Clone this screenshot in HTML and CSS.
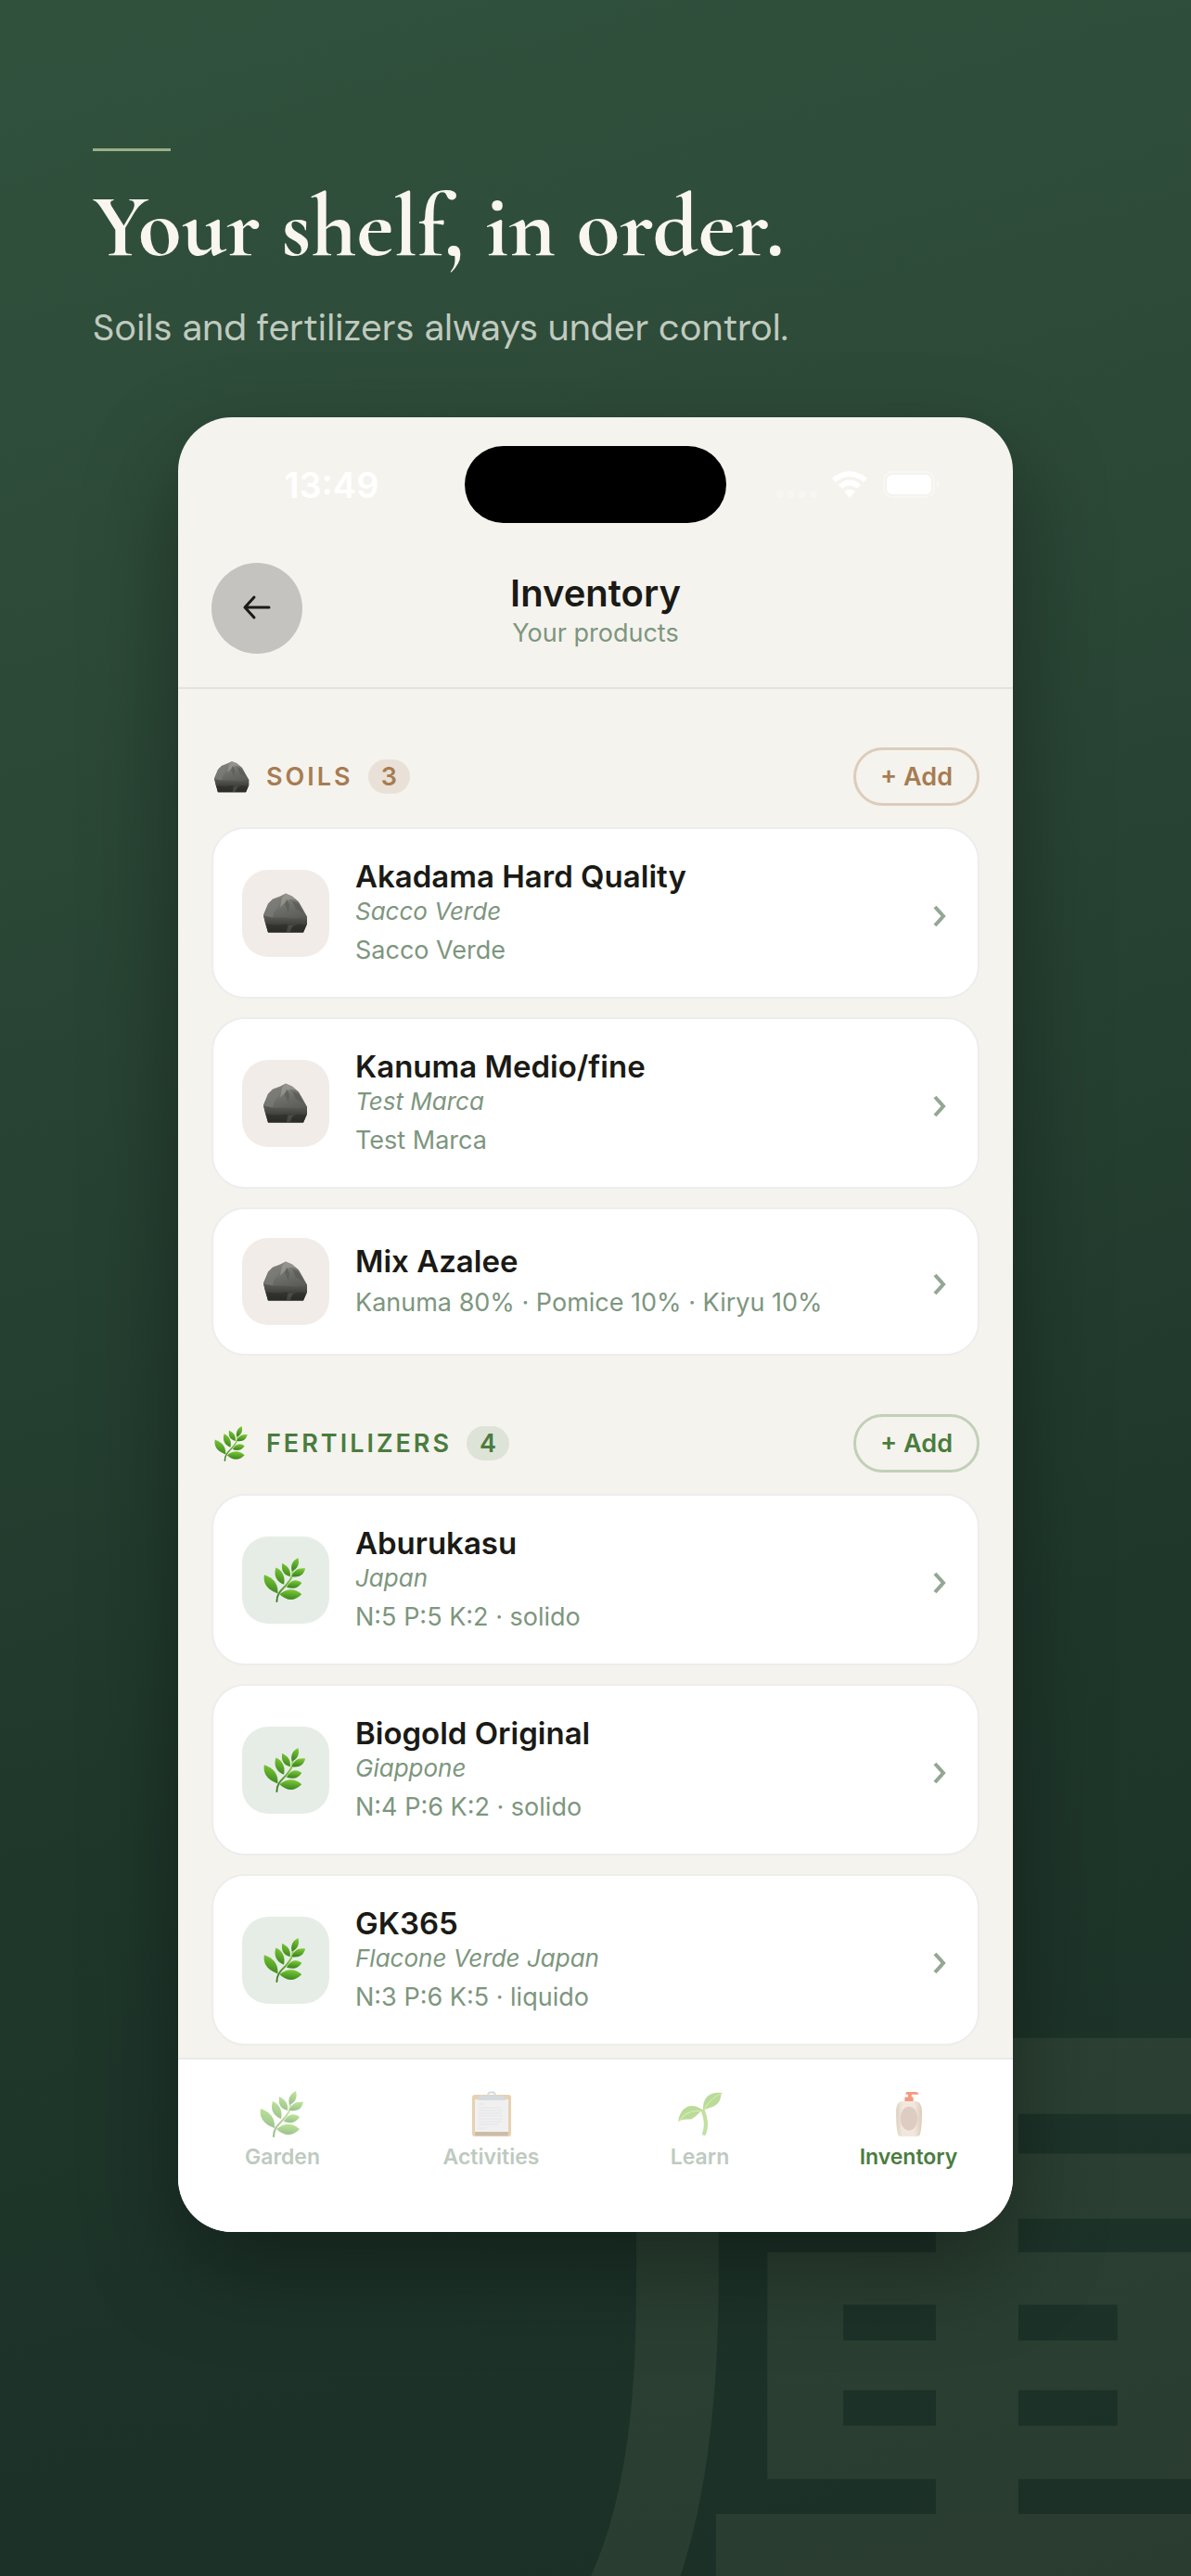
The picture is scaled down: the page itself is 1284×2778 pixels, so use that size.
FILE: index.html
```html
<!DOCTYPE html>
<html lang="en">
<head>
  <meta charset="UTF-8" />
  <meta name="viewport" content="width=device-width, initial-scale=1.0" />
  <title>Inventory</title>
  <link rel="stylesheet" href="styles.css">
</head>
<body>
  <svg class="sprite" aria-hidden="true">
    <defs>
      <linearGradient id="rockTop" x1="0" y1="0" x2="0.3" y2="1">
        <stop offset="0" stop-color="#8f8f88" />
        <stop offset="0.5" stop-color="#6c6d69" />
        <stop offset="1" stop-color="#50514d" />
      </linearGradient>
      <linearGradient id="rockBase" x1="0" y1="0" x2="0" y2="1">
        <stop offset="0" stop-color="#5c5d59" />
        <stop offset="0.5" stop-color="#41423e" />
        <stop offset="1" stop-color="#2a2b27" />
      </linearGradient>
      <linearGradient id="leafFill" x1="0.6" y1="0" x2="0.4" y2="1">
        <stop offset="0" stop-color="#7dcb35" />
        <stop offset="1" stop-color="#3a8320" />
      </linearGradient>
      <linearGradient id="leafStem" x1="1" y1="0" x2="0" y2="1">
        <stop offset="0" stop-color="#93d44a" />
        <stop offset="1" stop-color="#3c7a26" />
      </linearGradient>
      <linearGradient id="bottleFill" x1="0" y1="0" x2="1" y2="0">
        <stop offset="0" stop-color="#cdb89f" />
        <stop offset="0.25" stop-color="#eadccb" />
        <stop offset="0.7" stop-color="#eadccb" />
        <stop offset="1" stop-color="#c9b298" />
      </linearGradient>
    </defs>
    <symbol id="rock" viewBox="0 0 48 43">
      <path fill="url(#rockTop)" d="M24 0l7 3 7 6 4 7 5 9v8l-4 9H5L2 32 0 23l5-12 5-5 8-3z" />
      <path fill="#7b7c77" d="M10 7l10-3-4 9-5 8-1 5-9-2 4-12z" opacity=".7" />
      <path fill="#9c9c93" d="M24 0l7 3 4 4-6-1-4 2-7 7 2-10z" opacity=".7" />
      <path fill="#555651" d="M25 6l3 6-1 8-4-8zM31 8l7 3 5 10-8-4z" opacity=".6" />
      <path fill="url(#rockBase)" d="M0 24l10 2 14 0 12 1 11-2v8l-4 9H5L2 32z" />
      <path fill="#292a26" d="M3 33l12 1 10-1 4 4 8-4 9 1-3 8H5z" opacity=".55" />
      <path fill="#5f605b" d="M26 35l6-1-3 7-4 1z" opacity=".5" />
    </symbol>
    <symbol id="herb" viewBox="0 0 48 50">
      <path d="M14 49c0-10 6-13 11-19 5-6 7-9 7-16" fill="none" stroke="url(#leafStem)" stroke-width="2" stroke-linecap="round" />
      <g fill="url(#leafFill)">
        <path d="M38 0c2 7-1 13-7 15-2-7 1-12 7-15z" />
        <path d="M20 6c6 3 10 7 9 15-8-2-10-7-9-15z" />
        <path d="M13 11c7 3 11 10 9 19-8-3-12-10-9-19z" />
        <path d="M0 19c11 4 16 11 15 21C4 36-2 29 0 19z" />
        <path d="M46 12c-2 8-7 10-15 9 2-7 7-10 15-9z" />
        <path d="M42 28c-5 7-10 7-17 5 4-8 11-10 17-5z" />
        <path d="M42 41c-8 8-16 8-25 0 9-7 17-7 25 0z" />
      </g>
    </symbol>
    <symbol id="clipboard" viewBox="0 0 44 50">
      <rect x="1" y="4" width="42" height="45" rx="3" fill="#cfa468" />
      <path fill="#9a7a55" d="M4 44h36v3l-1 1H5l-1-1z" />
      <path fill="#e2e2e5" d="M4 9h36v35H4z" />
      <path fill="none" stroke="#cbcbd0" stroke-width="1" d="M8 14h6M8 18h24M8 21h26M8 24h25M8 27h26M8 30h26M8 33h25M8 36h21M8 40h8" />
      <path fill="#aeb4bb" d="M9 5h26l2 5H7z" />
      <path fill="none" stroke="#a9b8ce" stroke-width="2" d="M18 5c0-5 8-5 8 0" />
    </symbol>
    <symbol id="seedling" viewBox="0 0 48 48">
      <path d="M28 44c3-8 2-15-1-23" fill="none" stroke="#84c443" stroke-width="4" stroke-linecap="round" />
      <path fill="#78b836" d="M47 2c-3 1 0 5-5 11-4 4-9 4-15 7C26 8 33 0 47 2z" />
      <path fill="#78b836" d="M27 20c-4 1-6 6-12 9-5 1-10-1-14 3C3 17 14 10 27 20z" />
      <path fill="none" stroke="#a8dc5c" stroke-width="1" d="M28 19C32 12 38 6 45 3M2 31c6-8 13-12 23-10" />
    </symbol>
    <symbol id="bottle" viewBox="0 0 32 54">
      <path fill="#f0643c" d="M13 1h11c2 0 3 1 3 3h-8v3h2v5H11V7h4V4h-3z" />
      <path fill="url(#bottleFill)" d="M8 12h16c5 1 6 4 7 10 0 10 0 20-2 28-1 3-3 3-6 3H9c-3 0-5 0-6-3C1 42 1 32 1 22 2 16 3 13 8 12z" />
      <ellipse cx="16" cy="32" rx="10" ry="14" fill="#cdb1a4" />
    </symbol>
  </svg>

  <div class="backdrop" lang="ja" aria-hidden="true"><span>庫</span></div>

  <header class="hero">
    <span class="rule"></span>
    <h1>Your shelf, in order.</h1>
    <p>Soils and fertilizers always under control.</p>
  </header>

  <main class="phone">
    <div class="status">
      <span class="time">13:49</span>
      <span class="island"></span>
      <svg class="signals" viewBox="0 0 178 32">
        <g fill="#fff" opacity=".25">
          <rect x="0" y="22" width="8" height="8" rx="3" />
          <rect x="12" y="22" width="8" height="8" rx="3" />
          <rect x="24" y="22" width="8" height="8" rx="3" />
          <rect x="36" y="22" width="8" height="8" rx="3" />
        </g>
        <g fill="none" stroke="#fff" stroke-width="6">
          <path d="M62 11c10-9 24-9 34 0" />
          <path d="M69 18c6-6 14-6 20 0" />
        </g>
        <path fill="#fff" d="M73 23c4-3 8-3 12 0l-6 7z" />
        <rect x="116" y="2" width="54" height="27" rx="9" fill="none" stroke="#fff" stroke-width="2" opacity=".35" />
        <rect x="119" y="5" width="48" height="21" rx="6" fill="#fff" />
        <path fill="#fff" opacity=".4" d="M173 11c4 2 4 7 0 9z" />
      </svg>
    </div>

    <div class="topbar">
      <button class="back" aria-label="Back">
        <svg viewBox="0 0 32 28"><path d="M29 14H3M13 3L3 14l10 11" /></svg>
      </button>
      <div class="heading">
        <h2>Inventory</h2>
        <p>Your products</p>
      </div>
    </div>

    <div class="content">
      <section class="soils">
        <div class="section-head">
          <svg class="section-icon"><use href="#rock" /></svg>
          <h3>Soils</h3>
          <span class="count">3</span>
          <button class="add">+ Add</button>
        </div>
        <a class="card" href="#">
          <span class="tile"><svg><use href="#rock" /></svg></span>
          <span class="info">
            <strong>Akadama Hard Quality</strong>
            <em>Sacco Verde</em>
            <span>Sacco Verde</span>
          </span>
          <svg class="chevron" viewBox="0 0 18 24"><path d="M3 2l9 10-9 10" /></svg>
        </a>
        <a class="card" href="#">
          <span class="tile"><svg><use href="#rock" /></svg></span>
          <span class="info">
            <strong>Kanuma Medio/fine</strong>
            <em>Test Marca</em>
            <span>Test Marca</span>
          </span>
          <svg class="chevron" viewBox="0 0 18 24"><path d="M3 2l9 10-9 10" /></svg>
        </a>
        <a class="card" href="#">
          <span class="tile"><svg><use href="#rock" /></svg></span>
          <span class="info">
            <strong>Mix Azalee</strong>
            <span>Kanuma 80% · Pomice 10% · Kiryu 10%</span>
          </span>
          <svg class="chevron" viewBox="0 0 18 24"><path d="M3 2l9 10-9 10" /></svg>
        </a>
      </section>

      <section class="fertilizers">
        <div class="section-head">
          <svg class="section-icon"><use href="#herb" /></svg>
          <h3>Fertilizers</h3>
          <span class="count">4</span>
          <button class="add">+ Add</button>
        </div>
        <a class="card" href="#">
          <span class="tile"><svg><use href="#herb" /></svg></span>
          <span class="info">
            <strong>Aburukasu</strong>
            <em>Japan</em>
            <span>N:5 P:5 K:2 · solido</span>
          </span>
          <svg class="chevron" viewBox="0 0 18 24"><path d="M3 2l9 10-9 10" /></svg>
        </a>
        <a class="card" href="#">
          <span class="tile"><svg><use href="#herb" /></svg></span>
          <span class="info">
            <strong>Biogold Original</strong>
            <em>Giappone</em>
            <span>N:4 P:6 K:2 · solido</span>
          </span>
          <svg class="chevron" viewBox="0 0 18 24"><path d="M3 2l9 10-9 10" /></svg>
        </a>
        <a class="card" href="#">
          <span class="tile"><svg><use href="#herb" /></svg></span>
          <span class="info">
            <strong>GK365</strong>
            <em>Flacone Verde Japan</em>
            <span>N:3 P:6 K:5 · liquido</span>
          </span>
          <svg class="chevron" viewBox="0 0 18 24"><path d="M3 2l9 10-9 10" /></svg>
        </a>
      </section>
    </div>

    <nav class="tabs">
      <a href="#"><svg><use href="#herb" /></svg>Garden</a>
      <a href="#"><svg><use href="#clipboard" /></svg>Activities</a>
      <a href="#"><svg><use href="#seedling" /></svg>Learn</a>
      <a href="#" class="active"><svg><use href="#bottle" /></svg>Inventory</a>
    </nav>
  </main>
</body>
</html>
```
FILE: styles.css
```css
* {
  margin: 0;
  padding: 0;
  box-sizing: border-box;
}

body {
  position: relative;
  min-height: 100vh;
  padding: 160px 100px 72px;
  background: linear-gradient(165deg, #30523d 0%, #2d4a38 22%, #1f372b 65%, #1b2f27 100%);
  font-family: Inter, sans-serif;
}

.sprite {
  position: absolute;
  width: 0;
  height: 0;
}

.backdrop {
  position: absolute;
  inset: 0;
  overflow: hidden;
}

.backdrop span {
  position: absolute;
  right: -97px;
  bottom: -72px;
  font-family: "Noto Sans CJK JP", sans-serif;
  font-weight: 700;
  font-size: 780px;
  line-height: 1;
  color: rgba(168, 176, 130, 0.11);
}

.hero {
  position: relative;
}

.hero .rule {
  display: block;
  width: 84px;
  height: 3px;
  background: #9caf88;
}

.hero h1 {
  margin-top: 28px;
  font-family: "Cormorant Garamond", "Liberation Serif", serif;
  font-weight: 700;
  font-size: 96px;
  line-height: 108px;
  color: #f8f6ee;
}

.hero p {
  margin-top: 30px;
  font-family: "DM Sans", Inter, sans-serif;
  font-size: 40px;
  line-height: 48px;
  color: #c0cabf;
}

.phone {
  position: relative;
  max-width: 900px;
  margin: 73px auto 0;
  border-radius: 58px;
  overflow: hidden;
  background: #f5f3ee;
  box-shadow: 0 40px 100px rgba(0, 0, 0, 0.35);
}

.status {
  display: grid;
  grid-template-columns: 1fr 282px 1fr;
  align-items: center;
  padding-top: 31px;
  color: #fff;
}

.time {
  padding-left: 22px;
  text-align: center;
  font-size: 38px;
  font-weight: 600;
}

.island {
  height: 83px;
  border-radius: 42px;
  background: #000;
}

.signals {
  width: 178px;
  height: 32px;
  margin-left: 54px;
}

.topbar {
  display: grid;
  grid-template-columns: 98px 1fr 98px;
  align-items: center;
  padding: 43px 36px 36px;
  border-bottom: 2px solid #e3e2dd;
}

.back {
  width: 98px;
  height: 98px;
  border: 0;
  border-radius: 50%;
  background: #c5c3bf;
}

.back svg {
  width: 32px;
  height: 28px;
  fill: none;
  stroke: #1a1a16;
  stroke-width: 3;
  stroke-linecap: round;
  stroke-linejoin: round;
}

.heading {
  padding-top: 6px;
  text-align: center;
}

.heading h2 {
  font-size: 40px;
  font-weight: 600;
  line-height: 48px;
  color: #1a1a16;
}

.heading p {
  font-size: 27px;
  line-height: 38px;
  color: #7d967e;
}

.content {
  padding: 63px 36px 13px;
}

.section-head {
  display: flex;
  align-items: center;
  margin-bottom: 23px;
}

.section-icon {
  width: 38px;
  height: 38px;
  margin: 0 18px 0 3px;
}

.section-head h3 {
  margin-right: 16px;
  font-size: 27px;
  font-weight: 600;
  letter-spacing: 3px;
  text-transform: uppercase;
}

.count {
  padding: 0 14px;
  border-radius: 19px;
  font-size: 27px;
  font-weight: 600;
  line-height: 37px;
}

.add {
  height: 63px;
  margin-left: auto;
  padding: 0 26px;
  border: 3px solid;
  border-radius: 32px;
  background: none;
  font-family: inherit;
  font-size: 27px;
  font-weight: 600;
}

.soils h3,
.soils .count,
.soils .add {
  color: #a67c52;
}

.soils .count {
  background: #e9e1d7;
}

.soils .add {
  border-color: #dccdbb;
}

.fertilizers {
  margin-top: 63px;
}

.fertilizers h3,
.fertilizers .count,
.fertilizers .add {
  color: #4a7c3f;
}

.fertilizers .count {
  background: #dee3d8;
}

.fertilizers .add {
  border-color: #c1d0b8;
}

.card {
  display: flex;
  align-items: center;
  padding: 31px;
  border: 2px solid #ededed;
  border-radius: 36px;
  background: #fff;
  color: #7d967e;
  text-decoration: none;
}

.card + .card {
  margin-top: 20px;
}

.tile {
  display: flex;
  align-items: center;
  justify-content: center;
  width: 94px;
  height: 94px;
  margin-right: 28px;
  border-radius: 28px;
  background: #f2ece8;
}

.tile svg {
  width: 48px;
  height: 48px;
}

.fertilizers .tile {
  background: #e6ede6;
}

.info {
  flex: 1;
  padding-bottom: 1px;
  font-size: 27px;
  line-height: 36px;
}

.info > * {
  display: block;
}

.info strong {
  font-size: 33px;
  font-weight: 600;
  line-height: 40px;
  color: #1a1a16;
}

.info em {
  font-size: 26px;
  line-height: 35px;
}

.info > span {
  margin-top: 7px;
}

.chevron {
  width: 18px;
  height: 24px;
  margin-top: 6px;
  fill: none;
  stroke: #93a794;
  stroke-width: 4;
}

.tabs {
  display: flex;
  height: 188px;
  padding-top: 34px;
  border-top: 2px solid #e9e9e7;
  background: #fff;
}

.tabs a {
  flex: 1;
  display: flex;
  flex-direction: column;
  align-items: center;
  gap: 6px;
  font-size: 23px;
  font-weight: 600;
  line-height: 30px;
  color: #becabf;
  text-decoration: none;
}

.tabs svg {
  width: 50px;
  height: 50px;
  opacity: 0.5;
}

.tabs .active {
  color: #4a7c3f;
}

.tabs .active svg {
  opacity: 0.65;
}
```
